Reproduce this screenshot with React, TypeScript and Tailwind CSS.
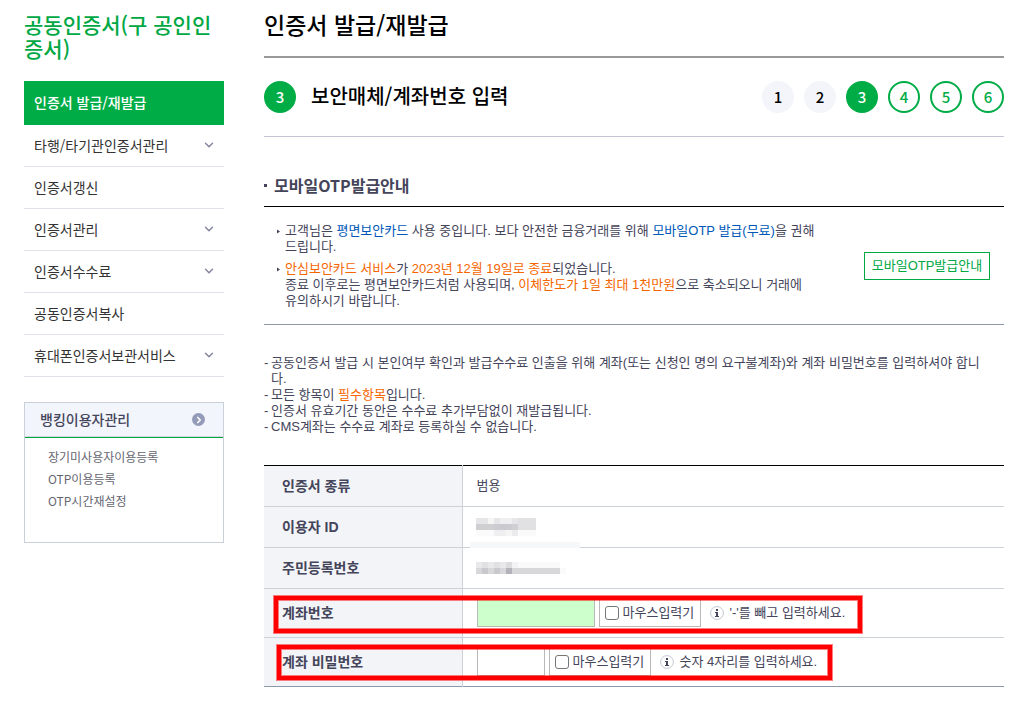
import { ChevronDown, ChevronRight } from 'lucide-react';
import clsx from 'clsx';
import type { ReactNode } from 'react';

const menu = [
  { label: '인증서 발급/재발급', active: true },
  { label: '타행/타기관인증서관리', sub: true },
  { label: '인증서갱신' },
  { label: '인증서관리', sub: true },
  { label: '인증서수수료', sub: true },
  { label: '공동인증서복사' },
  { label: '휴대폰인증서보관서비스', sub: true },
];

const bankingLinks = ['장기미사용자이용등록', 'OTP이용등록', 'OTP시간재설정'];

const CURRENT_STEP = 3;

// masked personal data, one grey per cell, 6px cells
const userIdMask = [
  ['#e6e6e8', '#e6e6e8', '#f5f5f5', '#e6e6e8', '#efeff1', '#efeff1', '#e6e6e8', '#e1e1e3', '#e1e1e3', '#e1e1e3'],
  ['#cfcfd1', '#d0d0d2', '#d0d0d2', '#cbcbd1', '#c9c9cf', '#cbcbd1', '#d0d0d4', '#e1e1e3', '#e1e1e3', '#e1e1e3'],
  ['#fafafa', '#fafafa', '#fafafa', '#efeff1', '#efeff1', '#f5f5f5', '#ebebed', '#fafafa', '#fafafa', '#fafafa'],
];
const residentMask = [
  ['#e9e9eb', '#e1e1e3', '#e9e9eb', '#e1e1e3', '#e9e9eb', '#dcdcde', '#f3f3f5', '#fafafa', '#fafafa', '#fafafa', '#fafafa', '#fafafa', '#fafafa', '#fafafa'],
  ['#d8d8da', '#c9c9cd', '#d8d8da', '#c9c9cd', '#d8d8da', '#b2b2b8', '#d8d8da', '#d8d8da', '#d8d8da', '#d8d8da', '#d8d8da', '#d8d8da', '#d8d8da', '#d8d8da', '#fafafa'],
];

function Mask({ cells }: { cells: string[][] }) {
  const cols = Math.max(...cells.map((row) => row.length));
  return (
    <svg className="-ml-px block" width={cols * 6} height={cells.length * 6} shapeRendering="crispEdges" aria-hidden="true">
      {cells.map((row, y) =>
        row.map((fill, x) => <rect key={`${x}-${y}`} x={x * 6} y={y * 6} width="6" height="6" fill={fill} />),
      )}
    </svg>
  );
}

function Sidebar() {
  return (
    <aside className="w-[200px] shrink-0 pt-3 font-['Noto_Sans_CJK_KR',sans-serif]">
      <h2 className="text-[21px] leading-6 font-medium break-all text-[#00a844]">공동인증서(구 공인인증서)</h2>
      <ul className="mt-[21px] text-[14px]">
        {menu.map((item) => (
          <li key={item.label}>
            <a
              href="#"
              className={clsx(
                'flex items-center justify-between px-2.5 pb-0.5',
                item.active ? 'h-11 bg-[#00ac46] font-medium text-white' : 'h-[42px] border-b border-[#e1e1ea] text-[#333]',
              )}
            >
              {item.label}
              {item.sub && <ChevronDown className="-mr-0.5 size-3.5 text-[#85859f]" strokeWidth={2.5} />}
            </a>
          </li>
        ))}
      </ul>
      <section className="mt-[25px] h-[141px] border border-[#c9d0d8]">
        <h3 className="border-b border-[#00a844]">
          <a
            href="#"
            className="flex h-[34px] items-center justify-between border-b border-[#d3d6dd] bg-[#f2f5fb] pr-[18px] pl-[15px] text-[14px] font-medium text-[#44445a]"
          >
            <span className="pb-0.5">뱅킹이용자관리</span>
            <span className="flex size-[13px] items-center justify-center rounded-full bg-[#939bb8] text-white">
              <ChevronRight className="size-2.5" strokeWidth={4} />
            </span>
          </a>
        </h3>
        <ul className="pt-2 pl-[23px] text-[12px] leading-[22px] text-[#666670]">
          {bankingLinks.map((link) => (
            <li key={link}>
              <a href="#">{link}</a>
            </li>
          ))}
        </ul>
      </section>
    </aside>
  );
}

function Step({ n }: { n: number }) {
  return (
    <span
      className={clsx(
        'flex size-8 items-center justify-center rounded-full pb-px text-[15px] leading-none font-medium',
        n < CURRENT_STEP && 'bg-[#f4f5fa] text-black',
        n === CURRENT_STEP && 'bg-[#00ac46] font-bold text-white',
        n > CURRENT_STEP && 'border-2 border-[#00ac46] text-[#00ac46]',
      )}
    >
      {n}
    </span>
  );
}

function Blue({ children }: { children: ReactNode }) {
  return <span className="text-[#0059b8]">{children}</span>;
}

function Orange({ children }: { children: ReactNode }) {
  return <span className="text-[#f56600]">{children}</span>;
}

function Bullet({ children }: { children: ReactNode }) {
  return (
    <li className="flex">
      <svg className="mt-1.5 mr-[5px] shrink-0" width="3" height="5" aria-hidden="true">
        <path d="M0 0.5 L3 2.5 L0 4.5 Z" fill="#44445a" />
      </svg>
      <p>{children}</p>
    </li>
  );
}

function Note({ children }: { children: ReactNode }) {
  return (
    <li className="flex">
      <span className="w-[7px] shrink-0">-</span>
      <p>{children}</p>
    </li>
  );
}

interface RowProps {
  label: string;
  htmlFor?: string;
  tall?: boolean;
  last?: boolean;
  children: ReactNode;
}

function Row({ label, htmlFor, tall, last, children }: RowProps) {
  return (
    <tr className={clsx('border-b', tall ? 'h-[49px]' : 'h-[41px]', last ? 'border-[#8e99a8]' : 'border-[#cdd2d9]')}>
      <th scope="row" className="border-r border-[#cdd2d9] bg-[#f2f4f8] pl-[18px] text-left text-[14px] leading-4 font-bold">
        {htmlFor ? <label htmlFor={htmlFor}>{label}</label> : label}
      </th>
      <td className="relative pl-3.5">{children}</td>
    </tr>
  );
}

function InfoIcon() {
  return (
    <svg className="ml-[9px] shrink-0" width="14" height="14" viewBox="0 0 14 14" aria-hidden="true">
      <circle cx="7" cy="7" r="6.4" fill="#fff" stroke="#c0c8d2" />
      <path d="M6 3h2v2H6zM5 6h3v4h1v1H5v-1h1V7H5z" fill="#44445a" />
    </svg>
  );
}

function MouseInput() {
  return (
    <label className="ml-1 flex h-7 w-[102px] items-center border border-[#b9b9b9] pl-[5px] whitespace-nowrap">
      <input
        type="checkbox"
        className="mr-1 size-3.5 shrink-0 appearance-none rounded-[3px] border border-[#767676] bg-white checked:bg-[#00ac46]"
      />
      마우스입력기
    </label>
  );
}

export default function App() {
  return (
    <div
      lang="ko"
      className="flex min-h-screen gap-10 bg-white pr-5 pb-9 pl-6 font-['Liberation_Sans','Noto_Sans_CJK_KR',sans-serif] text-[13px] leading-4 text-[#44445a]"
    >
      <Sidebar />

      <main className="min-w-0 flex-1">
        <h1 className="flex h-[58px] items-center border-b-2 border-[#999] pb-2 font-['Noto_Sans_CJK_KR',sans-serif] text-[23px] font-medium text-black">
          인증서 발급/재발급
        </h1>

        <div className="flex h-[79px] items-center justify-between border-b border-[#c5c5d6] font-['Noto_Sans_CJK_KR',sans-serif]">
          <h2 className="flex items-center gap-[15px] text-[20px] font-medium text-black">
            <Step n={CURRENT_STEP} />
            <span className="pb-0.5">보안매체/계좌번호 입력</span>
          </h2>
          <ol className="flex gap-2.5">
            {[1, 2, 3, 4, 5, 6].map((n) => (
              <li key={n}>
                <Step n={n} />
              </li>
            ))}
          </ol>
        </div>

        <section className="mt-9">
          <h3 className="flex items-center gap-[7px] pb-[9px] font-['Noto_Sans_CJK_KR',sans-serif] text-[16px] leading-6 font-bold text-[#44445a]">
            <span className="size-[3px] bg-[#44445a]" />
            모바일OTP발급안내
          </h3>
          <div className="flex items-center justify-between border-t border-b border-t-black border-b-[#8e99a8] pt-4 pr-3.5 pb-[15px] pl-[13px]">
            <ul className="space-y-1.5">
              <Bullet>
                고객님은 <Blue>평면보안카드</Blue> 사용 중입니다. 보다 안전한 금융거래를 위해 <Blue>모바일OTP 발급(무료)</Blue>을 권해
                <br />
                드립니다.
              </Bullet>
              <Bullet>
                <Orange>안심보안카드 서비스</Orange>가 <Orange>2023년 12월 19일로 종료</Orange>되었습니다.
                <br />
                종료 이후로는 평면보안카드처럼 사용되며, <Orange>이체한도가 1일 최대 1천만원</Orange>으로 축소되오니 거래에
                <br />
                유의하시기 바랍니다.
              </Bullet>
            </ul>
            <button type="button" className="h-7 w-[126px] shrink-0 border border-[#00a844] whitespace-nowrap text-[#00a844]">
              모바일OTP발급안내
            </button>
          </div>
        </section>

        <ul className="mt-[30px]">
          <Note>
            공동인증서 발급 시 본인여부 확인과 발급수수료 인출을 위해 계좌(또는 신청인 명의 요구불계좌)와 계좌 비밀번호를 입력하셔야 합니
            <br />
            다.
          </Note>
          <Note>
            모든 항목이 <Orange>필수항목</Orange>입니다.
          </Note>
          <Note>인증서 유효기간 동안은 수수료 추가부담없이 재발급됩니다.</Note>
          <Note>CMS계좌는 수수료 계좌로 등록하실 수 없습니다.</Note>
        </ul>

        <div className="relative mt-[30px]">
          <table className="w-full table-fixed border-collapse border-t border-black">
            <colgroup>
              <col className="w-[198px]" />
              <col />
            </colgroup>
            <tbody>
              <Row label="인증서 종류">범용</Row>
              <Row label="이용자 ID">
                <Mask cells={userIdMask} />
                <span className="absolute -bottom-px left-[7px] h-1.5 w-[110px] bg-[#f6f7f9]" />
              </Row>
              <Row label="주민등록번호">
                <Mask cells={residentMask} />
              </Row>
              <Row label="계좌번호" htmlFor="account" tall>
                <div className="flex items-center">
                  <input id="account" type="text" className="h-7 w-[118px] border border-[#b9b9b9] bg-[#ccffcc] px-1" />
                  <MouseInput />
                  <InfoIcon />
                  <span className="ml-1.5">'-'를 빼고 입력하세요.</span>
                </div>
              </Row>
              <Row label="계좌 비밀번호" htmlFor="account-pw" tall last>
                <div className="flex items-center">
                  <input id="account-pw" type="password" className="h-7 w-[68px] border border-[#b9b9b9] bg-white px-1" />
                  <MouseInput />
                  <InfoIcon />
                  <span className="ml-1.5">숫자 4자리를 입력하세요.</span>
                </div>
              </Row>
            </tbody>
          </table>

          {/* red highlight frames over the two account rows */}
          <div className="pointer-events-none absolute top-[131px] left-2.5 h-[37px] w-[588px] border-4 border-[#ff0000] shadow-[0_0_0_1px_#ff000080,inset_0_0_0_1px_#ff000080]" />
          <div className="pointer-events-none absolute top-[180px] left-[13px] h-[35px] w-[555px] border-4 border-[#ff0000] shadow-[0_0_0_1px_#ff000080,inset_0_0_0_1px_#ff000080]" />
        </div>
      </main>
    </div>
  );
}
